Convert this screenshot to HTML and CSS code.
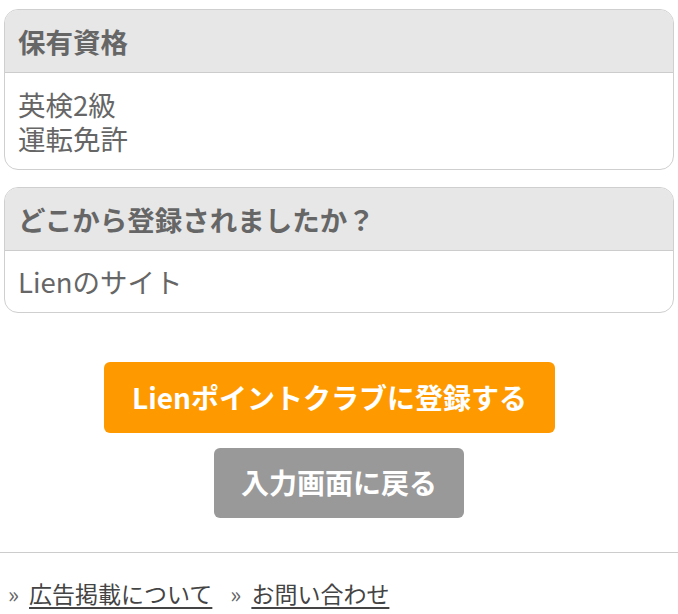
FILE: index.html
```html
<!DOCTYPE html>
<html lang="ja">
<head>
<meta charset="utf-8">
<link rel="stylesheet" href="styles.css">
</head>
<body>
<main class="page">
  <section class="card">
    <h2 class="card-head">保有資格</h2>
    <div class="card-body">
      <div class="card-line">英検2級</div>
      <div class="card-line">運転免許</div>
    </div>
  </section>
  <section class="card">
    <h2 class="card-head">どこから登録されましたか？</h2>
    <div class="card-body">
      <div class="card-line">Lienのサイト</div>
    </div>
  </section>
  <div class="actions">
    <button class="btn btn-primary" type="button">Lienポイントクラブに登録する</button>
    <button class="btn btn-back" type="button">入力画面に戻る</button>
  </div>
</main>
<footer class="footer">
  <nav class="footer-nav">
    <span class="footer-item"><span class="mark">»</span><a href="#" class="footer-link">広告掲載について</a></span>
    <span class="footer-item"><span class="mark">»</span><a href="#" class="footer-link">お問い合わせ</a></span>
  </nav>
</footer>
</body>
</html>
```
FILE: styles.css
```css
html, body {
  margin: 0;
  padding: 0;
  background: #fff;
}
body {
  font-family: "Noto Sans CJK JP", "Noto Sans", sans-serif;
  color: #666;
}
.page {
  padding: 9px 4px 0;
  display: flex;
  flex-direction: column;
  gap: 17px;
}
.card {
  border: 1px solid #cfcfcf;
  border-radius: 14px;
  overflow: hidden;
  background: #fff;
}
.card-head {
  margin: 0;
  background: #e7e7e7;
  border-bottom: 1px solid #cccccc;
  padding: 14px 13px;
  font-size: 27.5px;
  line-height: 34px;
  font-weight: bold;
  color: #666;
}
.card-body {
  padding: 14px 13px;
  font-size: 27.5px;
  line-height: 34px;
  color: #666;
}
.card + .card .card-body {
  padding: 13px 13px 14px;
}
.card-line {
  height: 34px;
}
.actions {
  display: flex;
  flex-direction: column;
  align-items: center;
  gap: 15px;
  margin-top: 32px;
}
.btn {
  border: 0;
  border-radius: 6px;
  color: #fff;
  font-family: "Noto Sans CJK JP", "Noto Sans", sans-serif;
  font-size: 28px;
  line-height: 35px;
  font-weight: bold;
  padding: 18px 0;
  text-align: center;
}
.btn-primary {
  background: #ff9900;
  width: 451px;
  margin-right: 19px;
}
.btn-back {
  background: #999999;
  width: 250px;
  padding: 17px 0 18px;
}
.footer {
  margin-top: 34px;
  border-top: 1px solid #cccccc;
  padding: 23px 8px 0;
}
.footer-nav {
  display: flex;
  gap: 18px;
  font-size: 23px;
  line-height: 34px;
}
.footer-item {
  display: flex;
  align-items: baseline;
  gap: 10px;
}
.mark {
  color: #666;
  font-size: 23px;
}
.footer-link {
  color: #444;
  text-decoration: underline;
  text-underline-offset: 4px;
}
```
